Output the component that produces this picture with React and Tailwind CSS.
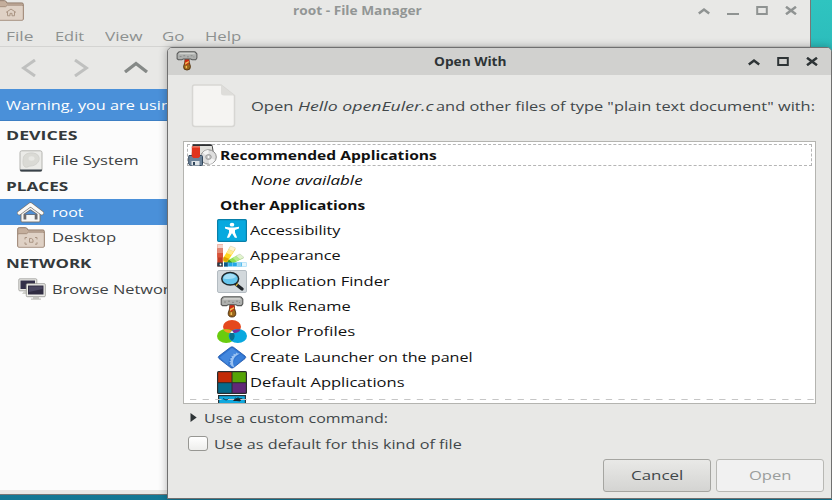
import { useLayoutEffect, useRef } from "react";

// Stretches a single line of text horizontally to the width of its box.
function Fit({ className = "", children }) {
  const box = useRef(null);
  const line = useRef(null);
  useLayoutEffect(() => {
    const fit = () => {
      const natural = line.current.offsetWidth;
      if (natural) line.current.style.transform = `scaleX(${box.current.clientWidth / natural})`;
    };
    fit();
    document.fonts?.ready.then(fit);
  }, []);
  return (
    <span ref={box} className={`block shrink-0 ${className}`}>
      <span ref={line} className="inline-block origin-left whitespace-nowrap">{children}</span>
    </span>
  );
}

function FolderIcon({ className, children }) {
  return (
    <svg viewBox="0 0 28 22" className={className} preserveAspectRatio="none">
      <path d="M.7 20V2.2Q.7.7 2.2.7h6.5q1 0 1.6 1.2l.6 1.2h15q1.4 0 1.4 1.4V20z" fill="#c4ae9c" stroke="#8f7968" />
      <path d="M.7 8.2Q.7 7 2 7h7.5l2-1.6h14.4q1.4 0 1.4 1.4V20q0 1.3-1.3 1.3H2Q.7 21.3.7 20z" fill="#dfd1c5" stroke="#a08a79" strokeWidth=".9" />
      {children}
    </svg>
  );
}

function DriveIcon() {
  return (
    <svg viewBox="0 0 24 22" className="h-[22px] w-6">
      <rect x="1" y=".8" width="22" height="20.5" rx="1.8" fill="#ebebe8" stroke="#b4b4b0" />
      <path d="M1 19.500h22v.5q0 1.500-1.500 1.500h-19Q1 21.500 1 20z" fill="#39424a" />
      <path d="M4.500 7C6 2 18 1 20 7c1.500 5-4 9-8 9-3 0-3 2-6 1-3-2-2-7-1.500-10z" fill="#dadad5" stroke="#cdcdc8" strokeWidth=".7" />
      <ellipse cx="12.500" cy="8.500" rx="3" ry="2.200" fill="#e8e8e4" />
    </svg>
  );
}

function HouseIcon() {
  return (
    <svg viewBox="0 0 27 21" className="h-[21px] w-[27px]">
      <path d="M4 11v8q0 1 1 1h17q1 0 1-1v-8l-9.500-7z" fill="#f6f6f4" stroke="#77706a" strokeWidth=".9" />
      <path d="M6.500 12 13.500 7.200 20.500 12v5.500h-2.800V13H9.300v4.500H6.500z" fill="#6b6a6c" />
      <path d="M7.500 12.300 13.500 8.200l6 4.100H7.500z" fill="#4e8fd6" />
      <path d="M10 13.300h7v4.700h-1.800v-3h-3.400v3H10z" fill="#f6f6f4" />
      <path d="m2.300 11 11.200-8.300L24.700 11" fill="none" stroke="#77706a" strokeWidth="4.600" strokeLinejoin="round" strokeLinecap="round" />
      <path d="m2.300 11 11.200-8.300L24.700 11" fill="none" stroke="#fafaf8" strokeWidth="3.400" strokeLinejoin="round" strokeLinecap="round" />
    </svg>
  );
}

function NetworkIcon() {
  return (
    <svg viewBox="0 0 28 22" className="h-[22px] w-7">
      <rect x=".8" y=".8" width="18" height="12" rx="1" fill="#e8e8e4" stroke="#9b9b97" strokeWidth=".8" />
      <rect x="2.500" y="2.500" width="14.500" height="8.500" fill="#33304a" />
      <path d="M6 13h5l1 3H4z" fill="#d0d0cb" />
      <rect x="8.300" y="5.700" width="19" height="13" rx="1" fill="#eeeeea" stroke="#91918d" strokeWidth=".8" />
      <rect x="10" y="7.500" width="15.500" height="9" fill="#302d42" />
      <path d="M11 8.500h13.500v2.500L11 14z" fill="#4a4761" />
      <path d="M15 18.700h6v1.800h2v1.200H13v-1.200h2z" fill="#c5c5c0" />
    </svg>
  );
}

function HammerIcon({ className }) {
  return (
    <svg viewBox="0 0 24 22" className={className} preserveAspectRatio="none">
      <path d="M10 8.500h4l.5 4 1.300 4.500q.2 4-3.800 4t-3.800-4L9.500 13z" fill="#9a651b" stroke="#4a2d0c" strokeWidth=".9" />
      <path d="M10 9h4l.6 4-3.600 3-1.500-2.500z" fill="#cf2a14" />
      <path d="m10 13 4-2v1.500l-4 2.500zM10.500 16.500q.8-.8 1.600 0v2.500h-1.600z" fill="#efbf55" />
      <path d="M2.800 1.200Q3.200.7 4 .7h16q.8 0 1.200.5l1.600 2v4.300q0 .6-.5 1L21.500 9.600H17.500L16 8.700H8l-1.500.9H2.500L1.200 8.500V3.200z" fill="#aeb0ae" stroke="#565756" strokeWidth="1.100" />
      <path d="M4.200 2h15.600l1.300 1.700H3z" fill="#d0d1ce" />
      <path d="M4 6h2m2-.8h2m2 1.200h2m2-1.200h2m1 1.300h1" stroke="#838482" strokeWidth=".9" />
    </svg>
  );
}

function InstallIcon() {
  return (
    <svg viewBox="0 0 29 22" className="h-[22px] w-[29px]">
      <path d="M5 .7h17.500q1.500 0 1.800 1.500L26 14H4z" fill="#e2e2de" stroke="#4a4a4a" />
      <path d="M5 .6h18.500l.6 1.500H4.800z" fill="#2f3133" />
      <ellipse cx="20.500" cy="13" rx="7.800" ry="7.200" fill="#dedede" stroke="#8c8c8c" />
      <path d="M20.500 13 14.500 8.500q3-3 6-2.500zM20.500 13l6.500 3q-2 4-6 4z" fill="#f5f5f5" />
      <ellipse cx="20.500" cy="13" rx="2.800" ry="2.500" fill="#c4c4c4" stroke="#8c8c8c" strokeWidth=".7" />
      <circle cx="20.500" cy="13" r=".9" fill="#fff" />
      <path d="M1 11.500h12.500q1 0 1 1v8q0 1-1 1H2.500L.7 20v-7.500z" fill="#6c8298" stroke="#30465c" />
      <path d="M3.500 17h8v4.500h-8z" fill="#dfe4e8" /><path d="M5 18h2v3H5z" fill="#30465c" />
      <path d="M3.800 2.500h8.200v9.700l-1.500 1.800H5.300l-1.500-1.800z" fill="#e0341d" />
      <path d="M3.800 2.500h8.200v1.200H3.800z" fill="#ef6a52" />
    </svg>
  );
}

const icon = "h-[23px] w-[30px]";

function AccessIcon() {
  return (
    <svg viewBox="0 0 30 23" className={icon}>
      <rect x=".6" y=".6" width="28.800" height="21.800" rx="1.200" fill="#07a9df" stroke="#087fa9" strokeWidth="1.200" />
      <ellipse cx="15" cy="5.700" rx="2.300" ry="1.900" fill="#fff" />
      <path d="M8 7.800 13 8.500h4l5-.7v1.800L18 11v2.500l2.200 5.200h-2.300L15 14.200l-2.900 4.500H9.800L12 13.500V11L8 9.600z" fill="#fff" />
    </svg>
  );
}

function AppearanceIcon() {
  return (
    <svg viewBox="0 0 30 23" className={icon}>
      <path d="M7 18 22.500 10.500l4 3.500L11 22z" fill="#8be04b" /><path d="m19 12 4-2 4 3.500-4 2z" fill="#e2f4cf" stroke="#bbc9ae" strokeWidth=".5" />
      <path d="m15.500 13.700 3.500-1.700 4 3.500-3.500 1.800z" fill="#b5ea8a" /><path d="m8 17 3.500-1.700 4 3.500-4 2z" fill="#429d1b" />
      <path d="M5 16 13 3l5.500 2.200L9 20z" fill="#ffd51c" /><path d="m11.500 5.500 2-3.500 5 2-2 3.500z" fill="#fff5d0" stroke="#d1c9ab" strokeWidth=".5" />
      <path d="m9.500 9 2-3.500 5 2-2.200 3.500z" fill="#ffe991" /><path d="m5 16 2-3.300 5 2L9.500 18z" fill="#dfa200" />
      <path d="M7 18.500h22.500v4H7z" fill="#22a7e6" /><path d="M25 18.500h4.500v4H25z" fill="#e5f5fc" /><path d="M20 18.500h4.500v4H20z" fill="#90d3f4" /><path d="M7 18.500h4v4H7z" fill="#115985" />
      <path d="M.3.500h5.700v22H.3z" fill="#c33b20" /><path d="M.3.500h5.700v4H.3z" fill="#f5d3ca" /><path d="M.3 4.500h5.700V9H.3z" fill="#e18672" /><path d="M.3 9h5.700v4.500H.3z" fill="#d95339" /><path d="M.3 18.500h5.700v4H.3z" fill="#273c4b" />
      <path d="M6 13.500v9M11 18.500v4M15.500 18.500v4M20 18.500v4" stroke="#fff" strokeWidth=".5" opacity=".6" />
      <circle cx="3.500" cy="20.500" r=".9" fill="#fff" />
    </svg>
  );
}

function FinderIcon() {
  return (
    <svg viewBox="0 0 30 23" className={icon}>
      <rect x=".5" y=".5" width="29" height="22" rx="1.500" fill="#d2d8dc" stroke="#b4bcc2" />
      <path d="m18 13.500 7 5.500" stroke="#20252a" strokeWidth="3.400" strokeLinecap="round" />
      <path d="m19.300 14.300 1 .8" stroke="#e8b92c" strokeWidth="3" />
      <ellipse cx="13.200" cy="8.800" rx="8.400" ry="6.300" fill="#66c6ee" stroke="#20282c" strokeWidth="1.500" />
      <path d="M6.500 8.500Q7 4 13 3.800q5 .2 6 3.200-4 3-12.500 1.500z" fill="#a5dff6" />
    </svg>
  );
}

function ProfilesIcon() {
  return (
    <svg viewBox="0 0 30 23" className={icon}>
      <ellipse cx="15" cy="6.800" rx="9" ry="6.700" fill="#e5481e" />
      <ellipse cx="9.200" cy="16" rx="9.200" ry="6.900" fill="#69cc0e" />
      <ellipse cx="20.800" cy="16" rx="9.200" ry="6.900" fill="#08a8df" />
      <path d="M15 11.500q2.700 2 2.700 4.800T15 21q-2.700-2-2.700-4.700t2.700-4.800z" fill="#0b6e8e" />
      <path d="M6.500 9.500q4-1 8.500 1.200l-1.800 2.200Q8 13 6.500 9.500z" fill="#f0a020" />
      <path d="M23.500 9.500q-4-1-8.500 1.200l1.800 2.200q5.200.1 6.700-3.400z" fill="#7b2f99" />
      <path d="m13.200 12.700 1.800-2 1.800 2q-1.800.7-3.600 0z" fill="#fff" />
    </svg>
  );
}

function LauncherIcon() {
  return (
    <svg viewBox="0 0 30 23" className={icon}>
      <path d="M13.500 1.300q1.500-1 3 0L28 10q1.500 1.300 0 2.600l-11.500 9q-1.500 1-3 0L2 12.600Q.500 11.300 2 10z" fill="#2f74d0" stroke="#1b51a4" strokeWidth=".8" />
      <path d="m15 2 7 5.300Q12 8 11 19L3 11.500z" fill="#4d91e4" opacity=".7" />
      <path d="m23 7.500-2.500 0-1-1-1 1.700-2-.5 0 2-2.200.3.700 1.800-2.200 1 1.300 1.500-2 1.500 1.700.8-1.300 1.900 1.700.2V20l3.300 1.500Q13 12 23 7.500z" fill="#9bc3f2" />
      <path d="M17 21Q15 12 24 8.500l3.500 2.800z" fill="#397fd9" />
    </svg>
  );
}

function DefaultsIcon() {
  return (
    <svg viewBox="0 0 30 23" className={icon}>
      <rect width="30" height="23" rx="1.500" fill="#292c2d" />
      <path d="M1.200 1.200h13.300v10H1.200z" fill="#c22b06" /><path d="M15.500 1.200h13.300v10H15.500z" fill="#55a407" />
      <path d="M1.200 12.200h13.300v9.600H1.200z" fill="#056b8b" /><path d="M15.500 12.200h13.300v9.600H15.500z" fill="#612878" />
    </svg>
  );
}

function DesktopIcon() {
  return (
    <svg viewBox="0 0 30 23" className={icon}>
      <path d="M1 0h28v23H1z" fill="#26333b" /><path d="M2.200 1.200h25.600V23H2.200z" fill="#10a9df" />
      <path d="m6 3.500 3 1.500 3-1M16.500 5l2-1.800 1.500.8 1-1.500 1 1.500 3-.4-2 2.400z" fill="none" stroke="#17232a" strokeWidth=".8" />
      <path d="M16 6l3-2.500h5L23 6z" fill="#17232a" />
    </svg>
  );
}

const apps = [
  [AccessIcon, "Accessibility", "w-[91px]"],
  [AppearanceIcon, "Appearance", "w-[91px]"],
  [FinderIcon, "Application Finder", "w-[140px]"],
  [null, "Bulk Rename", "w-[101px]"],
  [ProfilesIcon, "Color Profiles", "w-[105px]"],
  [LauncherIcon, "Create Launcher on the panel", "w-[223px]"],
  [DefaultsIcon, "Default Applications", "w-[155px]"],
];

function Up() {
  return <svg viewBox="0 0 12 8" className="h-2 w-3"><path d="m.8 6.500 5.200-4 5.200 4" fill="none" stroke="currentColor" strokeWidth="2.500" /></svg>;
}
function Box() {
  return <svg viewBox="0 0 12 9" className="h-[9px] w-3"><path d="M1.200 1h9.600v7H1.200z" fill="none" stroke="currentColor" strokeWidth="2" /></svg>;
}
function Close() {
  return <svg viewBox="0 0 12 9" className="h-[9px] w-3"><path d="m1 .8 10 7.400M11 .8 1 8.200" fill="none" stroke="currentColor" strokeWidth="2.500" /></svg>;
}

function FileManager() {
  return (
    <div className="flex h-[495px] w-[811px] flex-col border-r border-b border-[#777] bg-[#e8e8e6]">
      <div className="flex h-[23px] shrink-0 text-[#8f9392]">
        <FolderIcon className="-ml-1 h-[21px] w-7">
          <path d="m10 13 5-3.500 5 3.500m-8.500-.5v4h2.500v-2.500h2v2.500h2.500v-4" fill="none" stroke="#a99382" />
        </FolderIcon>
        <Fit className="ml-[269px] h-[21px] w-[129px] text-[12px] leading-[21px] font-bold text-[#929695]">root - File Manager</Fit>
        <div className="ml-[276px] flex h-[21px] items-center gap-[17px]">
          <Up />
          <span className="mt-[7px] h-[2px] w-3 bg-current" />
          <Box />
          <Close />
        </div>
      </div>
      <div className="flex h-[24px] shrink-0 border-b border-[#d4d4d2] pl-[6px] text-[13px] leading-[26px] text-[#8d9190]">
        <Fit className="mr-[21px] w-[28px]">File</Fit>
        <Fit className="mr-[21px] w-[29px]">Edit</Fit>
        <Fit className="mr-[20px] w-[37px]">View</Fit>
        <Fit className="mr-[21px] w-[22px]">Go</Fit>
        <Fit className="w-[36px]">Help</Fit>
      </div>
      <div className="flex h-[42px] shrink-0 items-center gap-[38px] pl-[21px]">
        <svg viewBox="0 0 15 18" className="h-[18px] w-[15px]"><path d="M14 1 2.500 9 14 17" fill="none" stroke="#bfc0bf" strokeWidth="3" /></svg>
        <svg viewBox="0 0 15 18" className="h-[18px] w-[15px]"><path d="m1 1 11.500 8L1 17" fill="none" stroke="#bfc0bf" strokeWidth="3" /></svg>
        <svg viewBox="0 0 24 12" className="mt-[-2px] -ml-[3px] h-3 w-6"><path d="m1 11 11-8.500L23 11" fill="none" stroke="#858987" strokeWidth="3.300" /></svg>
      </div>
      <div className="flex h-[32px] shrink-0 border-b border-[#3d7fc4] bg-[#4a90d9] pl-[6px] text-[13px] leading-[32px] text-white">
        <Fit className="w-[165px]">Warning, you are usin</Fit>
      </div>
      <div className="flex min-h-0 flex-1 flex-col bg-[#fcfcfc] pt-px text-[13px] text-[#3f4344]">
        <Fit className="ml-[6px] h-[26px] w-[71px] leading-[26px] font-bold text-[#34393b]">DEVICES</Fit>
        <div className="flex h-[25px] items-center pl-[19px] leading-[25px]"><DriveIcon /><Fit className="ml-[9px] w-[87px]">File System</Fit></div>
        <Fit className="ml-[6px] h-[26px] w-[62px] leading-[26px] font-bold text-[#34393b]">PLACES</Fit>
        <div className="flex h-[26px] items-center bg-[#4a90d9] pl-[17px] leading-[26px] text-white"><HouseIcon /><Fit className="ml-[8px] w-[32px]">root</Fit></div>
        <div className="flex h-[25px] items-center pl-[17px] leading-[25px]">
          <FolderIcon className="h-[21px] w-7">
            <path d="M8 13v-2h2m8 0h2v2m0 3v2h-2m-8 0H8v-2m4.500-4h2l1.500 1.300V16h-3.500z" fill="none" stroke="#a99382" />
          </FolderIcon>
          <Fit className="ml-[7px] w-[64px]">Desktop</Fit>
        </div>
        <Fit className="ml-[6px] h-[26px] w-[86px] leading-[26px] font-bold text-[#34393b]">NETWORK</Fit>
        <div className="flex h-[26px] items-center pl-[18px] leading-[26px]"><NetworkIcon /><Fit className="ml-[6px] w-[117px]">Browse Networ</Fit></div>
      </div>
      <div className="h-1 shrink-0 bg-[#e8e8e6]" />
    </div>
  );
}

function OpenWith() {
  return (
    <div className="absolute top-[47px] left-[167px] flex h-[452px] w-[665px] flex-col overflow-hidden rounded-t-[5px] border border-[#707070] bg-[#e8e8e6] text-[13px] text-[#41474a] shadow-[0_0_8px_rgba(0,0,0,0.3)]">
      <div className="flex h-[27px] shrink-0 items-center bg-[#d1d1cf] text-[#2e3436]">
        <HammerIcon className="mt-[-2px] ml-2 h-[20px] w-[22px]" />
        <Fit className="ml-[236px] w-[73px] text-[12px] leading-[27px] font-bold">Open With</Fit>
        <div className="ml-[241px] flex items-center gap-[17px]"><Up /><Box /><Close /></div>
      </div>
      <div className="flex h-[66px] shrink-0 items-center pl-[23px]">
        <svg viewBox="0 0 46 44" className="mt-[-4px] h-11 w-[46px]">
          <path d="M3.500 1H30l13.500 10.500V40q0 2.500-2.500 2.500H4Q1.500 42.500 1.500 40V3q0-2 2-2z" fill="#f5f4f2" stroke="#d7d6d3" strokeWidth="1.500" />
          <path d="M30 1v8q0 2.500 3 2.500h10.500z" fill="#deddda" />
        </svg>
        <div className="mt-[-4px] ml-[14px] flex leading-[24px]">
          <Fit className="mr-[5px] w-[42px]">Open</Fit>
          <Fit className="mr-[2px] w-[136px] italic">Hello openEuler.c</Fit>
          <Fit className="w-[379px]">and other files of type "plain text document" with:</Fit>
        </div>
      </div>
      <div className="ml-[15px] flex h-[263px] w-[633px] shrink-0 flex-col overflow-hidden border border-[#b4b4b0] bg-white text-[#111]">
        <div className="mt-[2px] ml-[3px] flex h-[22px] w-[625px] shrink-0 items-center border border-dashed border-[#b5b5b5]">
          <InstallIcon />
          <Fit className="ml-[3px] w-[217px] leading-[20px] font-bold">Recommended Applications</Fit>
        </div>
        <Fit className="ml-[67px] h-[26px] w-[112px] leading-[28px] italic">None available</Fit>
        <Fit className="ml-[36px] h-[26px] w-[145px] leading-[26px] font-bold">Other Applications</Fit>
        {apps.map(([Icon, name, width]) => (
          <div key={name} className="ml-[33px] flex h-[25.3px] shrink-0 items-center leading-[25px]">
            {Icon ? <Icon /> : <HammerIcon className="mx-[3px] h-[22px] w-6" />}
            <Fit className={`ml-[3px] ${width}`}>{name}</Fit>
          </div>
        ))}
        <div className="ml-[33px] h-[8px] shrink-0"><DesktopIcon /></div>
        <svg viewBox="0 0 625 1" className="relative top-[-4px] ml-[6px] h-px w-[625px] shrink-0"><path d="M0 .5h625" stroke="#c6c6c6" strokeDasharray="6.300 6.300" /></svg>
      </div>
      <div className="mt-[2px] flex h-[25px] shrink-0 items-center pl-[22px] leading-[25px]">
        <svg viewBox="0 0 7 9" className="mt-[-2px] h-[9px] w-[7px]"><path d="m.5 0 6.200 4.500L.5 9z" fill="#2e3436" /></svg>
        <Fit className="ml-[7px] w-[184px]">Use a custom command:</Fit>
      </div>
      <div className="flex h-[25px] shrink-0 items-center pl-[20px] leading-[24px]">
        <span className="mt-[-1px] h-[15px] w-5 rounded-[3px] border border-[#979793] bg-linear-to-b from-white to-[#eeeeec]" />
        <Fit className="ml-[6px] w-[248px]">Use as default for this kind of file</Fit>
      </div>
      <div className="mt-[3px] flex h-[33px] shrink-0 gap-[5px] pl-[435px] leading-[31px]">
        <div className="flex w-[108px] justify-center rounded-[3px] border border-[#a5a5a1] bg-linear-to-b from-[#e9e9e7] to-[#d4d4d2]"><Fit className="w-[52px]">Cancel</Fit></div>
        <div className="flex w-[108px] justify-center rounded-[3px] border border-[#b8b8b4] bg-[#f1f1f1] text-[#9a9d9c]"><Fit className="w-[42px]">Open</Fit></div>
      </div>
    </div>
  );
}

export default function App() {
  return (
    <div className="relative h-[500px] w-[832px] overflow-hidden bg-linear-to-b from-[#2fc4c0] to-[#137895] font-['Open_Sans','Noto_Sans',sans-serif]">
      <FileManager />
      <OpenWith />
    </div>
  );
}
